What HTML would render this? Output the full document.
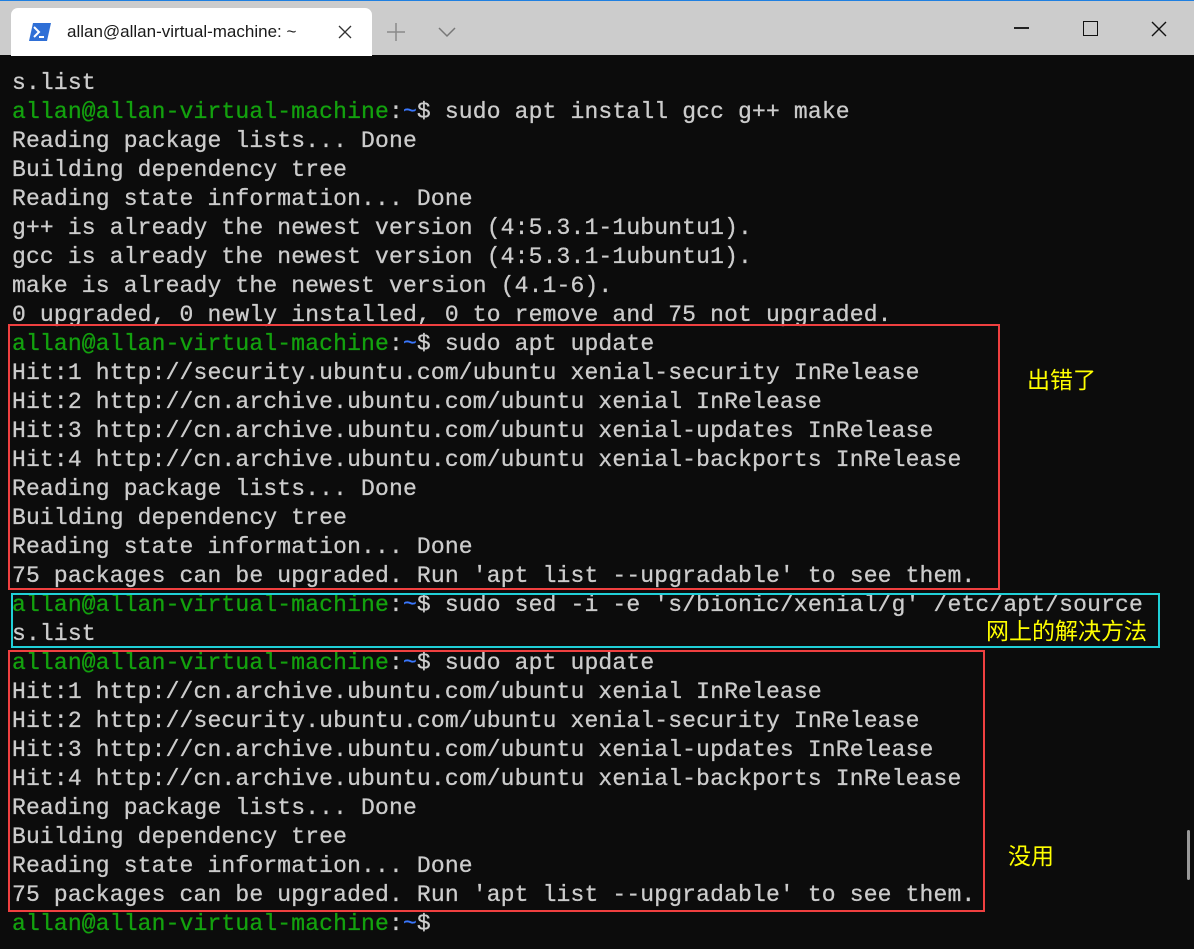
<!DOCTYPE html>
<html><head><meta charset="utf-8"><style>
*{margin:0;padding:0;box-sizing:border-box}
body{width:1194px;height:949px;background:#0c0c0c;position:relative;overflow:hidden}
.top{position:absolute;left:0;top:0;width:1194px;height:55px;background:#cccccc;border-top:1px solid #1f7fe0}
.tab{position:absolute;left:11px;top:7px;width:361px;height:48px;background:#fff;border-radius:7px 7px 0 0}
.tab .t{position:absolute;left:56px;top:14px;font:17px "Liberation Sans",sans-serif;color:#1a1a1a}
.term{position:absolute;left:12px;top:69px;font:23px/29px "Liberation Mono",monospace;letter-spacing:0.16px;color:#cccccc;white-space:pre;-webkit-text-stroke:0.3px}
.g{color:#13a10e}.b{color:#3b78ff}
.box{position:absolute;border:2px solid #f04040}
.cy{border-color:#20d0d8}
.ann{position:absolute;font:23px "Noto Sans CJK SC",sans-serif;color:#ffff00;line-height:1}
</style></head><body>
<div class="top">
<div class="tab">
<svg style="position:absolute;left:18px;top:15px" width="22" height="18" viewBox="0 0 22 18"><path d="M4 0H22L18 18H0Z" fill="#2f6fd6"/><path d="M5 4L10 9L5 14" stroke="#fff" stroke-width="2" fill="none"/><path d="M10 14H15" stroke="#fff" stroke-width="2"/></svg>
<div class="t">allan@allan-virtual-machine: ~</div>
<svg style="position:absolute;left:327px;top:17px" width="14" height="14"><path d="M1 1L13 13M13 1L1 13" stroke="#333" stroke-width="1.3"/></svg>
</div>
<svg style="position:absolute;left:386px;top:21px" width="20" height="20"><path d="M10 1V19M1 10H19" stroke="#8a8a8a" stroke-width="1.5"/></svg>
<svg style="position:absolute;left:438px;top:25px" width="18" height="12"><path d="M1 2L9 10L17 2" stroke="#777" stroke-width="1.5" fill="none"/></svg>
<div style="position:absolute;left:1014px;top:26px;width:15px;height:2px;background:#222"></div>
<div style="position:absolute;left:1083px;top:20px;width:15px;height:15px;border:1.5px solid #111"></div>
<svg style="position:absolute;left:1151px;top:20px" width="16" height="16"><path d="M1 1L15 15M15 1L1 15" stroke="#111" stroke-width="1.4"/></svg>
</div>
<div class="term">s.list
<span class="g">allan@allan-virtual-machine</span>:<span class="b">~</span>$ sudo apt install gcc g++ make
Reading package lists... Done
Building dependency tree
Reading state information... Done
g++ is already the newest version (4:5.3.1-1ubuntu1).
gcc is already the newest version (4:5.3.1-1ubuntu1).
make is already the newest version (4.1-6).
0 upgraded, 0 newly installed, 0 to remove and 75 not upgraded.
<span class="g">allan@allan-virtual-machine</span>:<span class="b">~</span>$ sudo apt update
Hit:1 http://security.ubuntu.com/ubuntu xenial-security InRelease
Hit:2 http://cn.archive.ubuntu.com/ubuntu xenial InRelease
Hit:3 http://cn.archive.ubuntu.com/ubuntu xenial-updates InRelease
Hit:4 http://cn.archive.ubuntu.com/ubuntu xenial-backports InRelease
Reading package lists... Done
Building dependency tree
Reading state information... Done
75 packages can be upgraded. Run 'apt list --upgradable' to see them.
<span class="g">allan@allan-virtual-machine</span>:<span class="b">~</span>$ sudo sed -i -e 's/bionic/xenial/g' /etc/apt/source
s.list
<span class="g">allan@allan-virtual-machine</span>:<span class="b">~</span>$ sudo apt update
Hit:1 http://cn.archive.ubuntu.com/ubuntu xenial InRelease
Hit:2 http://security.ubuntu.com/ubuntu xenial-security InRelease
Hit:3 http://cn.archive.ubuntu.com/ubuntu xenial-updates InRelease
Hit:4 http://cn.archive.ubuntu.com/ubuntu xenial-backports InRelease
Reading package lists... Done
Building dependency tree
Reading state information... Done
75 packages can be upgraded. Run 'apt list --upgradable' to see them.
<span class="g">allan@allan-virtual-machine</span>:<span class="b">~</span>$</div>
<div class="box" style="left:8px;top:324px;width:992px;height:266px"></div>
<div class="box cy" style="left:11px;top:593px;width:1149px;height:55px"></div>
<div class="box" style="left:8px;top:650px;width:977px;height:262px"></div>
<div class="ann" style="left:1027px;top:367px">出错了</div>
<div class="ann" style="left:986px;top:618px">网上的解决方法</div>
<div class="ann" style="left:1008px;top:843px">没用</div>
<div style="position:absolute;left:1187px;top:830px;width:3px;height:50px;background:#9a9a9a;border-radius:2px"></div>
</body></html>
